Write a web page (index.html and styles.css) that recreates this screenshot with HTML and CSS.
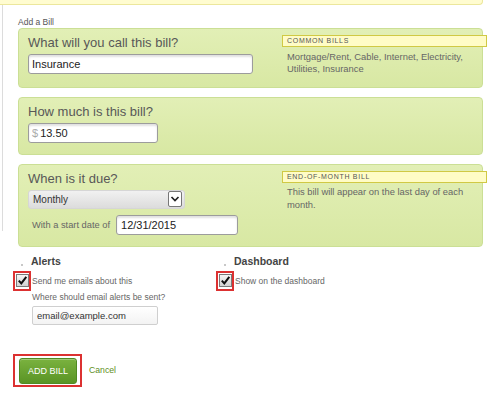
FILE: index.html
```html
<!DOCTYPE html>
<html lang="en">
<head>
  <meta charset="UTF-8">
  <meta name="viewport" content="width=device-width, initial-scale=1.0">
  <title>Add a Bill</title>
  <link rel="stylesheet" href="styles.css">
</head>
<body>
  <div class="topbar"></div>

  <div class="page">
    <div class="page-title">Add a Bill</div>

    <div class="panel">
      <div class="panel-main">
        <h2>What will you call this bill?</h2>
        <input class="text-input name-input" type="text" value="Insurance">
      </div>
      <div class="panel-aside">
        <div class="tag">Common Bills</div>
        <p>Mortgage/Rent, Cable, Internet, Electricity, Utilities, Insurance</p>
      </div>
    </div>

    <div class="panel">
      <div class="panel-main">
        <h2>How much is this bill?</h2>
        <div class="text-input amount-input">
          <span class="currency">$</span>
          <span>13.50</span>
        </div>
      </div>
      <div class="panel-aside"></div>
    </div>

    <div class="panel">
      <div class="panel-main">
        <h2>When is it due?</h2>
        <div class="select">
          <span class="select-value">Monthly</span>
          <span class="select-arrow">
            <svg width="12" height="14" viewBox="0 0 12 14"><path d="M2.5 5 L6 8.5 L9.5 5" fill="none" stroke="#222" stroke-width="1.7"/></svg>
          </span>
        </div>
        <div class="date-row">
          <label for="start-date">With a start date of</label>
          <input class="text-input date-input" id="start-date" type="text" value="12/31/2015">
        </div>
      </div>
      <div class="panel-aside">
        <div class="tag">End-of-month bill</div>
        <p>This bill will appear on the last day of each month.</p>
      </div>
    </div>

    <div class="options">
      <div class="option-col">
        <h3><span class="dot"></span>Alerts</h3>
        <div class="check-row">
          <span class="highlight">
            <span class="checkbox">
              <svg width="11" height="11" viewBox="0 0 11 11"><path d="M1.8 5.6 L4.3 8.4 L9.3 1.8" fill="none" stroke="#111" stroke-width="2"/></svg>
            </span>
          </span>
          <span class="check-label">Send me emails about this</span>
        </div>
        <div class="sub-field">
          <div class="sub-label">Where should email alerts be sent?</div>
          <input class="email-input" type="text" value="email@example.com">
        </div>
      </div>
      <div class="option-col">
        <h3><span class="dot"></span>Dashboard</h3>
        <div class="check-row">
          <span class="highlight">
            <span class="checkbox">
              <svg width="11" height="11" viewBox="0 0 11 11"><path d="M1.8 5.6 L4.3 8.4 L9.3 1.8" fill="none" stroke="#111" stroke-width="2"/></svg>
            </span>
          </span>
          <span class="check-label">Show on the dashboard</span>
        </div>
      </div>
    </div>

    <div class="actions">
      <span class="btn-highlight">
        <button class="btn">ADD BILL</button>
      </span>
      <a class="cancel" href="#">Cancel</a>
    </div>
  </div>
</body>
</html>
```

FILE: styles.css
```css
:root {
  --panel-top: #e2efb6;
  --panel-bottom: #d8e8a3;
  --panel-border: #cbdf95;
  --tag-bg: #fffcc6;
  --tag-border: #d0c944;
  --text-dark: #555;
  --text-muted: #666;
  --mark-red: #dc3131;
  --font-family: 'Liberation Sans', Arial, sans-serif;
}

body {
  margin: 0;
  font-family: var(--font-family);
  color: var(--text-dark);
  background: #fff;
}

.topbar {
  width: 482px;
  height: 4px;
  background: #fffcd0;
  border-right: 1px solid #ece79c;
  border-bottom: 1px solid #ece79c;
  border-radius: 0 0 4px 0;
}

.page {
  position: relative;
  padding: 12px 0 0 18px;
}

.page::before {
  content: '';
  position: absolute;
  left: 2px;
  top: 0;
  width: 1px;
  height: 226px;
  background: #dcdcdc;
}

.page-title {
  font-size: 8.5px;
  line-height: 11px;
  color: var(--text-dark);
}

.panel {
  width: 465px;
  box-sizing: border-box;
  display: grid;
  grid-template-columns: 1fr 200px;
  padding: 6px 0 11px 9px;
  margin-bottom: 9px;
  border: 1px solid var(--panel-border);
  border-radius: 4px;
  background: linear-gradient(var(--panel-top), var(--panel-bottom));
}

.panel:first-of-type {
  padding-bottom: 12px;
}

.panel h2 {
  margin: 0 0 4px;
  font-size: 13px;
  line-height: 15px;
  font-weight: normal;
  color: #585858;
}

.panel-aside {
  margin-right: -5px;
}

.tag {
  height: 12px;
  box-sizing: border-box;
  padding: 0 4px;
  border: 1px solid var(--tag-border);
  background: var(--tag-bg);
  font-size: 7px;
  line-height: 10px;
  letter-spacing: 0.7px;
  text-transform: uppercase;
  color: #555;
}

.panel-aside p {
  margin: 3.5px 0 0;
  padding: 0 10px 0 5px;
  font-size: 9.4px;
  line-height: 12.5px;
  color: var(--text-muted);
}

.text-input {
  height: 20px;
  box-sizing: border-box;
  padding: 0 3px;
  border: 1px solid #9c9c9c;
  border-radius: 3px;
  background: #fff;
  box-shadow: inset 0 2px 2px rgba(0, 0, 0, 0.12);
  font-family: var(--font-family);
  font-size: 11px;
  color: #222;
}

.name-input {
  width: 225px;
}

.amount-input {
  width: 130px;
  display: flex;
  align-items: center;
  gap: 2px;
}

.currency {
  color: #aaa;
}

.select {
  width: 157px;
  height: 19px;
  box-sizing: border-box;
  display: flex;
  align-items: center;
  border: 1px solid #d6d6d6;
  border-radius: 3px;
  background: linear-gradient(#f1f1f1, #dcdcdc);
}

.select-value {
  flex: 1;
  padding-left: 4px;
  font-size: 10px;
  color: #333;
}

.select-arrow {
  width: 14px;
  height: 16px;
  box-sizing: border-box;
  margin-right: 2px;
  display: flex;
  align-items: center;
  justify-content: center;
  border: 1px solid #777;
  border-radius: 2px;
  background: #fff;
}

.date-row {
  display: flex;
  align-items: center;
  gap: 6px;
  margin-top: 6px;
  padding-left: 4px;
}

.date-row label {
  font-size: 9.3px;
  color: var(--text-muted);
}

.date-input {
  width: 122px;
  padding-left: 4px;
}

.options {
  display: grid;
  grid-template-columns: 203px 1fr;
  margin: -0.5px 0 0 -5px;
}

.options h3 {
  display: flex;
  align-items: flex-end;
  margin: 0;
  font-size: 10.5px;
  line-height: 13px;
  font-weight: bold;
  color: #444;
}

.dot {
  width: 2px;
  height: 2px;
  margin: 0 8px 2px;
  background: #c8c8c8;
}

.check-row {
  display: flex;
  align-items: center;
  margin-top: 2.5px;
}

.highlight {
  width: 18px;
  height: 20px;
  box-sizing: border-box;
  display: flex;
  align-items: center;
  justify-content: center;
  border: 2px solid var(--mark-red);
}

.checkbox {
  width: 13px;
  height: 13px;
  box-sizing: border-box;
  display: flex;
  align-items: center;
  justify-content: center;
  border: 1px solid #7a7a7a;
  background: linear-gradient(#f6f6f6, #d2d2d2);
}

.check-label {
  margin-left: 1px;
  font-size: 8.5px;
  color: var(--text-muted);
}

.sub-field {
  padding-left: 19px;
}

.sub-label {
  font-size: 8.5px;
  line-height: 12px;
  color: var(--text-muted);
}

.email-input {
  width: 126px;
  height: 19px;
  box-sizing: border-box;
  margin-top: 3px;
  padding: 0 4px;
  border: 1px solid #cfcfcf;
  border-radius: 2px;
  background: linear-gradient(#fff, #f3f3f3);
  font-family: var(--font-family);
  font-size: 9.5px;
  color: #333;
}

.actions {
  display: flex;
  align-items: center;
  margin: 29px 0 0 -5px;
}

.btn-highlight {
  display: flex;
  padding: 2px 3px 1px 4px;
  border: 2px solid var(--mark-red);
}

.btn {
  width: 58px;
  height: 26px;
  border: 1px solid #4f8a22;
  border-radius: 3px;
  background: linear-gradient(#7ab23f, #5a9425);
  box-shadow: inset 0 1px 0 rgba(255, 255, 255, 0.3);
  color: #fff;
  font-family: var(--font-family);
  font-size: 9px;
  cursor: pointer;
}

.cancel {
  margin-left: 7px;
  font-size: 8.7px;
  color: #5e8f24;
  text-decoration: none;
}
```
